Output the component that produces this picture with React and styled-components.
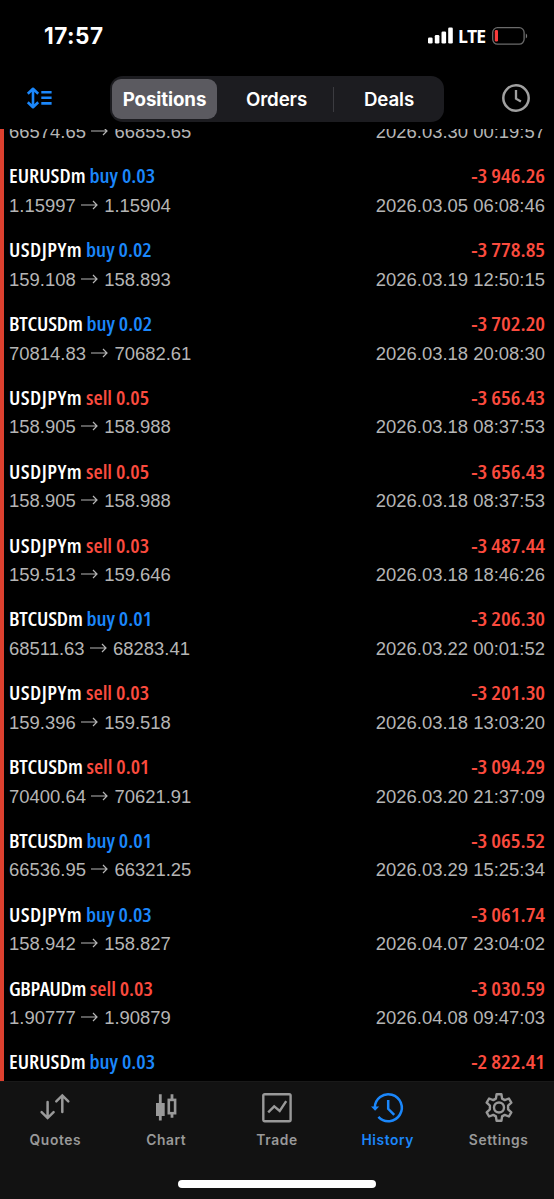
import React from 'react';
import styled, { createGlobalStyle } from 'styled-components';

const BLUE = '#1b87fb';
const RED = '#fb4b3e';

const GlobalStyle = createGlobalStyle`
  * { box-sizing: border-box; }
  html, body { margin: 0; padding: 0; background: #000; }
  body { font-family: Inter, 'Liberation Sans', sans-serif; }
  svg { display: block; flex: none; }
`;

const Screen = styled.div`
  width: 554px;
  height: 1199px;
  display: flex;
  flex-direction: column;
  background: #000;
  color: #fff;
  overflow: hidden;
`;

const StatusBar = styled.div`
  height: 76px;
  flex: none;
  display: flex;
  align-items: center;
  justify-content: space-between;
  padding: 0 26px 5px 44px;
`;

const Clock = styled.span`
  font-size: 22.5px;
  font-weight: 700;
  line-height: 28px;
  letter-spacing: 0.5px;
`;

const Indicators = styled.div`
  display: flex;
  align-items: center;
`;

const Network = styled.span`
  margin: 0 7px 0 5px;
  font-family: 'Open Sans', sans-serif;
  font-size: 17.6px;
  font-weight: 700;
  line-height: 20px;
  letter-spacing: -1px;
`;

const Toolbar = styled.div`
  height: 53px;
  flex: none;
  display: flex;
  align-items: flex-start;
  justify-content: space-between;
  padding: 0 23px 0 26px;
`;

const ToolButton = styled.button`
  display: flex;
  padding: ${(p) => p.$top}px 0 0;
  border: 0;
  background: none;
  color: ${(p) => p.$color};
`;

const Segments = styled.div`
  width: 334px;
  height: 46px;
  display: flex;
  align-items: center;
  padding: 3px 2px;
  border-radius: 13px;
  background: #1c1c20;
`;

const Segment = styled.button`
  flex: none;
  width: ${(p) => p.$width}px;
  height: 40px;
  padding: 1px 0 0 ${(p) => p.$inset || 0}px;
  border: 0;
  border-radius: 9px;
  background: ${(p) => (p.$active ? '#5b5a60' : 'transparent')};
  color: #fff;
  font-family: Inter, sans-serif;
  font-size: 18.7px;
  font-weight: ${(p) => (p.$active ? 700 : 600)};
  letter-spacing: -0.1px;
  line-height: 39px;
`;

const Divider = styled.span`
  flex: none;
  width: 1px;
  height: 25px;
  background: #3b3b40;
`;

const History = styled.main`
  height: 952px;
  flex: none;
  overflow: hidden;
  border-left: 4px solid #dc402f;
`;

const Rows = styled.div`
  margin-top: -49px;
`;

const Row = styled.div`
  height: 73.84px;
  padding: 7.9px 9px 0 5px;
`;

const Line = styled.div`
  height: 29.5px;
  display: flex;
  align-items: center;
  justify-content: space-between;
`;

const Title = styled.div`
  font-family: 'Open Sans', sans-serif;
  font-size: 19.2px;
  font-weight: 600;
  font-stretch: 75%;
  line-height: 28px;
  white-space: pre;
  transform: scaleX(1.095);
  transform-origin: left center;
`;

const Symbol = styled.span`
  font-weight: 650;
  letter-spacing: ${(p) => p.$tracking}px;
`;

const Side = styled.span`
  color: ${(p) => (p.$side === 'buy' ? BLUE : RED)};
`;

const Profit = styled(Title)`
  color: ${RED};
  transform: scaleX(1.135);
  transform-origin: right center;
`;

const Detail = styled.div`
  display: flex;
  align-items: center;
  color: #b5b5b5;
  font-family: 'Liberation Sans', sans-serif;
  font-size: 18.45px;
  line-height: 22px;
  white-space: pre;
`;

const ArrowGlyph = styled.svg`
  margin: 0 6px 2px 5.5px;
`;

const TabBar = styled.nav`
  flex: 1;
  display: flex;
  flex-direction: column;
  background: #121212;
  border-top: 1px solid #191919;
`;

const Tabs = styled.div`
  height: 96px;
  display: grid;
  grid-template-columns: repeat(5, 1fr);
`;

const Tab = styled.div`
  display: flex;
  flex-direction: column;
  align-items: center;
  padding-top: 9px;
  color: ${(p) => (p.$active ? BLUE : '#999')};
`;

const TabLabel = styled.span`
  margin-top: 6px;
  font-size: 13.8px;
  font-weight: 600;
  line-height: 18px;
  letter-spacing: 0.6px;
`;

const HomeIndicator = styled.div`
  width: 198px;
  height: 8px;
  margin: 2px auto 0;
  border-radius: 4px;
  background: #fff;
`;

const SignalIcon = () => (
  <svg width="25" height="17" viewBox="0 0 25 17" fill="#fff">
    <rect x="0" y="10.5" width="4.6" height="6" rx="1.3" />
    <rect x="6.8" y="8" width="4.6" height="8.5" rx="1.3" />
    <rect x="13.5" y="4.5" width="4.6" height="12" rx="1.3" />
    <rect x="20.2" y="0.5" width="4.6" height="16" rx="1.3" />
  </svg>
);

const BatteryIcon = () => (
  <svg width="36" height="18" viewBox="0 0 36 18" fill="none">
    <rect x="0.7" y="0.7" width="31.4" height="16.4" rx="4.8" stroke="#6b6b6b" strokeWidth="1.3" />
    <rect x="2.8" y="3" width="3.2" height="11.5" rx="1.2" fill="#fb3b3b" />
    <path d="M33.8 6.5c1.8.7 1.8 4.3 0 5z" fill="#777" />
  </svg>
);

const SortIcon = () => (
  <svg width="27" height="22" viewBox="0 0 27 22" fill="none" stroke="currentColor" strokeWidth="2.6">
    <path d="M7 2.2v17.6M1.8 6.8 7 1.8l5.2 5M1.8 15.2l5.2 5 5.2-5" strokeLinejoin="round" />
    <path d="M15.3 5.2h10.3M15.3 10.8h10.3M15.3 16.4h10.3" />
  </svg>
);

const PeriodIcon = () => (
  <svg width="30" height="30" viewBox="0 0 30 30" fill="none" stroke="currentColor">
    <circle cx="15" cy="15" r="12.7" strokeWidth="2.5" />
    <path d="M15 7v8.7l4.9 2.9" strokeWidth="2.3" />
  </svg>
);

const Arrow = () => (
  <ArrowGlyph width="17" height="12" viewBox="0 0 17 12" fill="none" stroke="currentColor" strokeWidth="1.2">
    <path d="M0 6h16M12 2 16 6 12 10" />
  </ArrowGlyph>
);

const QuotesIcon = () => (
  <svg width="34" height="34" viewBox="0 0 34 34" fill="none" stroke="currentColor" strokeWidth="2.5" strokeLinecap="round">
    <path d="M9.6 11v16M3.6 21.2l6 5.9 6-5.9M24.3 21V4.4M18.3 10.3l6-5.9 6 5.9" />
  </svg>
);

const ChartIcon = () => (
  <svg width="34" height="34" viewBox="0 0 34 34" fill="none" stroke="currentColor" strokeWidth="2.8">
    <path d="M11.3 3.2v26.4M23 3.2v5M23 22.2v4.6" />
    <rect x="7" y="12" width="8.7" height="13" fill="currentColor" stroke="none" />
    <rect x="19.8" y="8.9" width="6.3" height="13.3" strokeWidth="2.6" />
  </svg>
);

const TradeIcon = () => (
  <svg width="34" height="34" viewBox="0 0 34 34" fill="none" stroke="currentColor" strokeWidth="2.4">
    <rect x="3.3" y="3.2" width="27.3" height="27" rx="1.4" />
    <path d="m8.2 21.4 6-6.1 5.5 4.6 6.5-9.7" />
  </svg>
);

const HistoryIcon = () => (
  <svg width="34" height="34" viewBox="0 0 34 34" fill="none" stroke="currentColor" strokeWidth="2.5">
    <path d="M3.8 16.8A13.5 13.5 0 1 1 7.4 25.9" />
    <path d="M0 15.6h8.2l-4.1 4.2z" fill="currentColor" stroke="none" />
    <path d="M17.2 9v8.8l6 6" />
  </svg>
);

const SettingsIcon = () => (
  <svg width="34" height="34" viewBox="0 0 34 34" fill="none" stroke="currentColor" strokeWidth="2.4" strokeLinejoin="round">
    <path d="M14.6 3.2h4.8l.7 4.4 2.6 1.5 4.2-1.6 2.4 4.2-3.2 3v3.6l3.2 3-2.4 4.2-4.2-1.6-2.6 1.5-.7 4.4h-4.8l-.7-4.4-2.6-1.5-4.2 1.6-2.4-4.2 3.2-3v-3.6l-3.2-3 2.4-4.2 4.2 1.6 2.6-1.5z" />
    <circle cx="17" cy="16.5" r="5" />
  </svg>
);

const positions = [
  ['EURUSDm', 'buy', '0.03', '', '66574.65', '66855.65', '2026.03.30 00:19:57'],
  ['EURUSDm', 'buy', '0.03', '-3 946.26', '1.15997', '1.15904', '2026.03.05 06:08:46'],
  ['USDJPYm', 'buy', '0.02', '-3 778.85', '159.108', '158.893', '2026.03.19 12:50:15'],
  ['BTCUSDm', 'buy', '0.02', '-3 702.20', '70814.83', '70682.61', '2026.03.18 20:08:30'],
  ['USDJPYm', 'sell', '0.05', '-3 656.43', '158.905', '158.988', '2026.03.18 08:37:53'],
  ['USDJPYm', 'sell', '0.05', '-3 656.43', '158.905', '158.988', '2026.03.18 08:37:53'],
  ['USDJPYm', 'sell', '0.03', '-3 487.44', '159.513', '159.646', '2026.03.18 18:46:26'],
  ['BTCUSDm', 'buy', '0.01', '-3 206.30', '68511.63', '68283.41', '2026.03.22 00:01:52'],
  ['USDJPYm', 'sell', '0.03', '-3 201.30', '159.396', '159.518', '2026.03.18 13:03:20'],
  ['BTCUSDm', 'sell', '0.01', '-3 094.29', '70400.64', '70621.91', '2026.03.20 21:37:09'],
  ['BTCUSDm', 'buy', '0.01', '-3 065.52', '66536.95', '66321.25', '2026.03.29 15:25:34'],
  ['USDJPYm', 'buy', '0.03', '-3 061.74', '158.942', '158.827', '2026.04.07 23:04:02'],
  ['GBPAUDm', 'sell', '0.03', '-3 030.59', '1.90777', '1.90879', '2026.04.08 09:47:03'],
  ['EURUSDm', 'buy', '0.03', '-2 822.41'],
];

const tracking = { EURUSDm: 0, USDJPYm: 0.38, BTCUSDm: -0.2, GBPAUDm: -0.35 };

const tabs = [
  ['Quotes', QuotesIcon],
  ['Chart', ChartIcon],
  ['Trade', TradeIcon],
  ['History', HistoryIcon],
  ['Settings', SettingsIcon],
];

function PositionRow({ data, clipped }) {
  const [symbol, side, volume, profit, open, close, time] = data;
  return (
    <Row>
      <Line>
        {!clipped && (
          <>
            <Title>
              <Symbol $tracking={tracking[symbol]}>{symbol}</Symbol> <Side $side={side}>{side} {volume}</Side>
            </Title>
            <Profit>{profit}</Profit>
          </>
        )}
      </Line>
      {open && (
        <Line>
          <Detail>{open}<Arrow />{close}</Detail>
          <Detail>{time}</Detail>
        </Line>
      )}
    </Row>
  );
}

export default function App() {
  return (
    <>
      <GlobalStyle />
      <Screen>
        <StatusBar>
          <Clock>17:57</Clock>
          <Indicators>
            <SignalIcon />
            <Network>LTE</Network>
            <BatteryIcon />
          </Indicators>
        </StatusBar>
        <Toolbar>
          <ToolButton $top={10.5} $color={BLUE}><SortIcon /></ToolButton>
          <Segments>
            <Segment $active $width={105}>Positions</Segment>
            <Segment $width={116} $inset={3}>Orders</Segment>
            <Divider />
            <Segment $width={108} $inset={2}>Deals</Segment>
          </Segments>
          <ToolButton $top={6.5} $color="#a0a0a0"><PeriodIcon /></ToolButton>
        </Toolbar>
        <History>
          <Rows>
            {positions.map((p, i) => <PositionRow key={i} data={p} clipped={i === 0} />)}
          </Rows>
        </History>
        <TabBar>
          <Tabs>
            {tabs.map(([label, Icon]) => (
              <Tab key={label} $active={label === 'History'}>
                <Icon />
                <TabLabel>{label}</TabLabel>
              </Tab>
            ))}
          </Tabs>
          <HomeIndicator />
        </TabBar>
      </Screen>
    </>
  );
}
